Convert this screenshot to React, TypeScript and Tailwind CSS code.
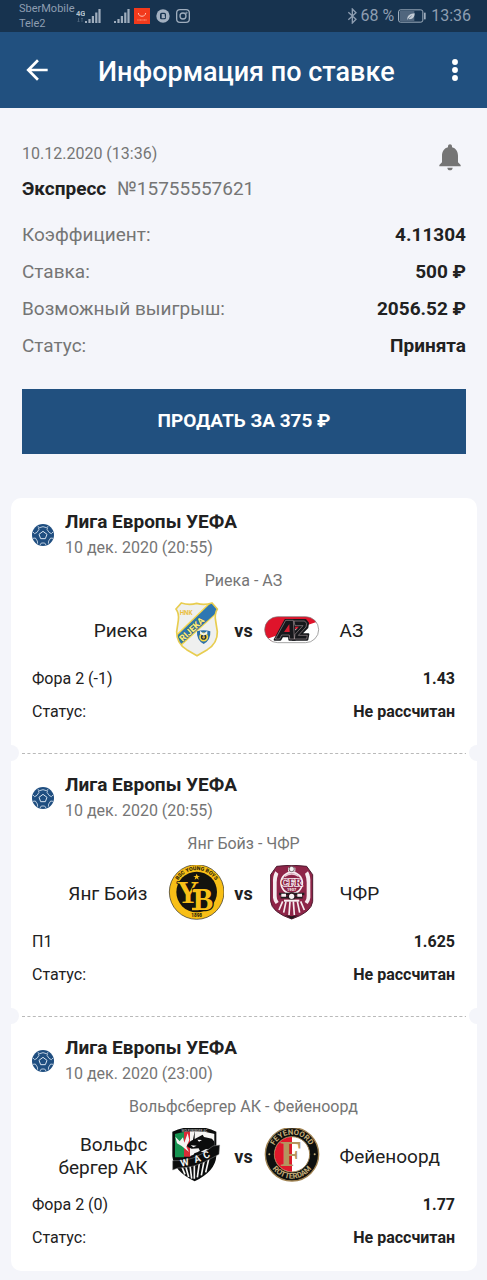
import type { ReactNode } from "react";

type Match = {
  date: string;
  title: string;
  home: string;
  away: string;
  homeLogo: ReactNode;
  awayLogo: ReactNode;
  bet: string;
  odds: string;
};

function Signal() {
  return (
    <svg className="h-4 w-4" viewBox="0 0 16 16" fill="#9fadbd" aria-hidden="true">
      <rect x="0" y="13" width="2" height="2" />
      <rect x="3.4" y="11" width="2.2" height="4" />
      <rect x="6.8" y="8" width="2.2" height="7" />
      <rect x="10.2" y="4.5" width="2.2" height="10.5" />
      <rect x="13.4" y="1" width="2.2" height="14" />
    </svg>
  );
}

function StatusBar() {
  return (
    <div className="flex h-8 items-center justify-between bg-[#17334f] pr-4 pl-[19px] text-[#8e9eb1]">
      <div className="flex items-center">
        <div className="text-[11px] leading-[15px]">
          <div>SberMobile</div>
          <div>Tele2</div>
        </div>
        <svg className="ml-px h-4 w-[9px]" viewBox="0 0 9 16" aria-hidden="true">
          <text x="0" y="8" fontSize="7.5" fontWeight="700" fontFamily="Roboto" fill="#b5c0cc">
            4G
          </text>
          <path d="M2.500 10v4M2.500 14l-1-1M2.500 14l1-1M6 14v-4M6 10l-1 1M6 10l1 1" stroke="#4d647c" strokeWidth="0.9" fill="none" />
        </svg>
        <Signal />
        <span className="w-[13px]" />
        <Signal />
        <svg className="ml-1 h-4 w-4" viewBox="0 0 48 48" aria-hidden="true">
          <rect width="48" height="48" fill="#f23a1c" />
          <path d="M13 15c1 13 21 13 22 0" fill="none" stroke="#ffc4b4" strokeWidth="3" />
          <path d="M10 36h29" stroke="#ff9a80" strokeWidth="3" strokeDasharray="3 1" />
        </svg>
        <svg className="ml-[6px] h-[14px] w-[14px]" viewBox="0 0 42 42" aria-hidden="true">
          <circle cx="21" cy="21" r="20" fill="#a3b0c0" />
          <rect x="12" y="11" width="18" height="20" rx="5" fill="#17334f" />
          <path d="M17 15h6q4 0 4 3 0 2-2 3 3 1 3 3 0 4-5 4h-6z" fill="#a3b0c0" />
        </svg>
        <svg className="ml-[6px] h-[14px] w-[14px]" viewBox="0 0 42 42" fill="none" stroke="#9fadbd" strokeWidth="4" aria-hidden="true">
          <rect x="2" y="2" width="38" height="38" rx="10" />
          <circle cx="21" cy="21" r="9" />
          <circle cx="31.500" cy="11" r="1" />
        </svg>
      </div>
      <div className="flex items-center text-[16px] leading-5">
        <svg className="h-4 w-[11px]" viewBox="0 0 33 48" fill="none" stroke="#8e9eb1" strokeWidth="4" aria-hidden="true">
          <path d="M4 13l23 21-11 11V3l11 11L4 35" />
        </svg>
        <span className="ml-[2px]">68 %</span>
        <svg className="ml-1 h-[14px] w-7" viewBox="0 0 84 42" aria-hidden="true">
          <rect x="1.500" y="2.500" width="73" height="37" rx="6" fill="none" stroke="#9fadbd" strokeWidth="3" />
          <rect x="5" y="6" width="44" height="30" fill="#50667e" />
          <path d="M28 32c-1-13 9-18 22-19 0 13-7 19-19 17z" fill="#c3ccd6" />
          <path d="M30 30l11-10" stroke="#50667e" strokeWidth="2" />
          <rect x="78" y="11" width="5" height="20" fill="#9fadbd" />
        </svg>
        <span className="ml-[5px]">13:36</span>
      </div>
    </div>
  );
}

function Ball() {
  return (
    <svg className="h-[22px] w-[22px] shrink-0" viewBox="0 0 66 66" aria-hidden="true">
      <circle cx="33" cy="33" r="33" fill="#1f4e80" />
      <g fill="none" stroke="#d8e4f0" strokeWidth="3" strokeLinejoin="round">
        <path d="M33 22l12 9-5 13H26l-5-13z" />
        <path d="M17 7l6 4 10-3 10 3 6-4M3 24l5 5 7-4 6-9-2-5M63 24l-5 5-7-4-6-9 2-5M3 43l7-1 6 9 1 8M63 43l-7-1-6 9-1 8M24 63l4-6h10l4 6" strokeWidth="2.500" />
      </g>
    </svg>
  );
}

function RijekaLogo() {
  return (
    <svg className="h-14 w-14" viewBox="24 36 168 168" role="img" aria-label="Риека">
      <defs>
        <clipPath id="rijeka">
          <path d="M64 39q23 8 46 1 23 7 46-1l16 18q-9 15-5 36l5 32q1 34-30 54l-31 18-31-18q-31-20-30-54l5-34q3-20-7-34z" />
        </clipPath>
      </defs>
      <g clipPath="url(#rijeka)">
        <rect x="40" y="36" width="140" height="168" fill="#eff0ef" />
        <path d="M38 144L156 30l26 30L54 176z" fill="#f3d64b" />
        <path d="M40 148L156 36l22 24L54 170z" fill="#2e77b2" />
        <text transform="translate(68 156) rotate(-43)" fontFamily="Roboto" fontSize="27" fontWeight="900" fill="#f8ea7a" stroke="#1d4f6e" strokeWidth="2" paintOrder="stroke">
          RIJEKA
        </text>
      </g>
      <path d="M64 39q23 8 46 1 23 7 46-1l16 18q-9 15-5 36l5 32q1 34-30 54l-31 18-31-18q-31-20-30-54l5-34q3-20-7-34z" fill="none" stroke="#e8cd50" strokeWidth="5" />
      <text x="59" y="76" fontFamily="Roboto" fontSize="19" fontWeight="700" fill="#e9bf3f">
        HNK
      </text>
      <path d="M111 124q20-7 40 0 2 27-20 38-22-11-20-38z" fill="#2b70a8" />
      <circle cx="131" cy="141" r="11" fill="#21343b" stroke="#f4d746" strokeWidth="5" />
      <path d="M120 122l11 9 11-9v9l-11 6-11-6z" fill="#f1f1e9" />
      <circle cx="131" cy="142" r="4" fill="#d9a83b" />
    </svg>
  );
}

function AzLogo() {
  return (
    <svg className="h-14 w-14" viewBox="312 36 168 168" role="img" aria-label="АЗ">
      <defs>
        <clipPath id="az">
          <rect x="314" y="80" width="162" height="78" rx="39" />
        </clipPath>
      </defs>
      <g clipPath="url(#az)">
        <rect x="312" y="78" width="168" height="82" fill="#fff" />
        <path d="M312 78h154l8 18-140 60-22-22z" fill="#df142b" />
        <path d="M312 150l40-14 124-42v66H322z" fill="#fff" />
      </g>
      <rect x="314" y="80" width="162" height="78" rx="39" fill="none" stroke="#777" strokeWidth="2" />
      <g fill="#16171b" stroke="#16171b" strokeWidth="6" strokeLinejoin="round">
        <path d="M344 149l32-59h25l4 59h-17l-1-10h-20l-6 10z" />
        <path d="M397 90h40l7 9-2 14-20 20h23l-3 16h-44l3-19 23-23h-23z" />
      </g>
      <path d="M346 147l31-56h23l3 56h-14l-1-12h-23l-6 12zM402 93h32l6 7-2 11-23 25h27l-2 11h-37l2-14 24-26h-24z" fill="none" stroke="#c7b3b6" strokeWidth="1.500" />
      <path d="M372 126l16-24 1 24z" fill="#d31c30" />
    </svg>
  );
}

function YoungBoysLogo() {
  return (
    <svg className="h-14 w-14" viewBox="24 30 168 168" role="img" aria-label="Янг Бойз">
      <defs>
        <path id="yb-top" d="M44 111a66 66 0 0 1 132 0" />
      </defs>
      <circle cx="110" cy="111" r="82" fill="#f8bf17" stroke="#27251f" strokeWidth="2" />
      <circle cx="110" cy="111" r="61" fill="#14130f" />
      <text fontFamily="Roboto" fontSize="16" fontWeight="900" fill="#30270b">
        <textPath href="#yb-top" startOffset="50%" textAnchor="middle">
          BSC YOUNG BOYS
        </textPath>
      </text>
      <path d="M110 56l3 7h7l-6 4 2 7-6-4-6 4 2-7-6-4h7z" fill="#f8bf17" />
      <g fontFamily="Liberation Serif" fontWeight="700" fill="#f8bf17" strokeLinejoin="round" paintOrder="stroke">
        <text x="50" y="143" fontSize="92" stroke="#14130f" strokeWidth="5">Y</text>
        <text x="98" y="166" fontSize="92" stroke="#14130f" strokeWidth="8">B</text>
      </g>
      <path d="M98 104h22v8H98zM96 158h20v8H96z" fill="#f8bf17" />
      <text x="110" y="187" textAnchor="middle" fontFamily="Roboto" fontSize="14" fontWeight="900" fill="#30270b">
        1898
      </text>
    </svg>
  );
}

function CfrLogo() {
  return (
    <svg className="h-14 w-14" viewBox="312 30 168 168" role="img" aria-label="ЧФР">
      <path d="M350 34q45-7 90 0l18 25v80q-3 33-63 53-60-20-63-53V59z" fill="#8e2548" stroke="#4c1b30" strokeWidth="3" />
      <path d="M346 49q-8 14-7 35v44q1 10 8 19l9-6q-7-10-6-18V82q0-13 5-26zM444 49q8 14 7 35v44q-1 10-8 19l-9-6q7-10 6-18V82q0-13-5-26z" fill="#f6edf0" />
      <circle cx="395" cy="84" r="32" fill="#8e2548" stroke="#f8eef2" strokeWidth="5" />
      <path d="M384 38h22v12h-22z" fill="#eee" />
      <circle cx="395" cy="42" r="8" fill="#f7f2f4" stroke="#38252d" strokeWidth="2" />
      <path d="M374 64q21-14 42 0" stroke="#e8cbd5" strokeWidth="4" fill="none" />
      <text x="395" y="92" textAnchor="middle" fontFamily="Liberation Serif" fontSize="31" fontWeight="700" fill="#8e2548" stroke="#f8edf1" strokeWidth="5" paintOrder="stroke">
        CFR
      </text>
      <text x="395" y="108" textAnchor="middle" fontFamily="Roboto" fontSize="12" fontWeight="700" fill="#fff">
        1907
      </text>
      <path d="M357 117h76M362 127h66" stroke="#221d20" strokeWidth="7" />
      <path d="M364 116h14v9h-14zM412 116h14v9h-14z" fill="#f7f1f3" />
      <circle cx="395" cy="124" r="10" fill="#f7f1f3" stroke="#28161e" strokeWidth="4" />
      <path d="M372 137h46" stroke="#f7f1f3" strokeWidth="6" />
      <path d="M368 139l-11 26M378 139l-7 34M390 139l-3 41M400 139l3 41M412 139l7 34M422 139l11 26" stroke="#f6edf1" strokeWidth="5" />
      <path d="M375 180l20 12 20-12-20 4z" fill="#24171d" />
    </svg>
  );
}

function WacLogo() {
  return (
    <svg className="h-14 w-14" viewBox="24 30 168 168" role="img" aria-label="Вольфсбергер АК">
      <defs>
        <clipPath id="wac">
          <path d="M44 48q30-9 60-9 30 0 60 9v64q0 51-60 79-60-28-60-79z" />
        </clipPath>
      </defs>
      <path d="M37 41q33-15 67-14 35-1 65 14v73q-3 46-65 76-62-29-67-75z" fill="#0b0d0d" />
      <g clipPath="url(#wac)">
        <path d="M44 40h28v78H44z" fill="#169451" />
        <path d="M72 40h20v76H72z" fill="#d92c38" />
        <path d="M90 40h14l-6 30 20 34-28 10z" fill="#f5f5f3" />
        <path d="M104 40h60v60h-60z" fill="#f5f5f3" />
        <path d="M46 56l13 14 10-12 4 16 10-28 5 20-9 20 8 16-22-18-14-8z" fill="#f5f5f3" />
        <path d="M81 82l11-13 12-6 24-13 4 7 24 5 14 18v42H95l8-16 17-6-4-9-21 1-12-5z" fill="#0b0d0d" />
        <path d="M92 82l18 1-10 5zM112 65l14 1-9 5z" fill="#fff" />
        <path d="M122 101l16-8 14 2-14 3 4 8z" fill="#e9e9e9" />
      </g>
      <text x="103" y="42" textAnchor="middle" fontFamily="Roboto" fontSize="9" fontWeight="500" fill="#b5b5b3">
        WOLFSBERGER AC
      </text>
      <g stroke="#f5f5f3" strokeWidth="5" clipPath="url(#wac)">
        <path d="M65 145l10 24M77 145l9 32M90 143l5 39M103 141v41M118 136l-6 42M132 130l-8 42M146 124l-9 39" />
      </g>
      <path d="M38 128q62 6 121-44l20-3-2 28-23 12q-50 30-100 29l-16 6z" fill="#0b0d0d" stroke="#8d8e8e" strokeWidth="1.500" />
      <g fontFamily="Roboto" fontSize="29" fontWeight="700" fill="#f5f5f3">
        <text transform="translate(64 146) rotate(-13)">W</text>
        <text transform="translate(106 135) rotate(-19)">A</text>
        <text transform="translate(135 124) rotate(-25)">C</text>
      </g>
    </svg>
  );
}

function FeyenoordLogo() {
  return (
    <svg className="h-14 w-14" viewBox="312 30 168 168" role="img" aria-label="Фейеноорд">
      <defs>
        <path id="fey-top" d="M337 109a59 59 0 0 1 118 0" />
        <path id="fey-bottom" d="M323 109a73 73 0 0 0 146 0" />
      </defs>
      <circle cx="396" cy="109" r="80" fill="#0e100f" stroke="#a08352" strokeWidth="4" />
      <circle cx="396" cy="109" r="53" fill="#fff" stroke="#a08352" strokeWidth="3" />
      <path d="M396 57a52 52 0 0 0 0 104z" fill="#df192b" />
      <g fontFamily="Roboto" fontSize="23" fontWeight="700" fill="#c6ad78">
        <text>
          <textPath href="#fey-top" startOffset="50%" textAnchor="middle">FEYENOORD</textPath>
        </text>
        <text>
          <textPath href="#fey-bottom" startOffset="50%" textAnchor="middle">ROTTERDAM</textPath>
        </text>
      </g>
      <circle cx="328" cy="109" r="3" fill="#c6ad78" />
      <circle cx="464" cy="109" r="3" fill="#c6ad78" />
      <text x="393" y="145" textAnchor="middle" fontFamily="Liberation Serif" fontSize="108" fontWeight="700" fill="#b5955f">
        F
      </text>
    </svg>
  );
}

const summary = [
  ["Коэффициент:", "4.11304"],
  ["Ставка:", "500 ₽"],
  ["Возможный выигрыш:", "2056.52 ₽"],
  ["Статус:", "Принята"],
];

const matches: Match[] = [
  {
    date: "10 дек. 2020 (20:55)",
    title: "Риека - АЗ",
    home: "Риека",
    away: "АЗ",
    homeLogo: <RijekaLogo />,
    awayLogo: <AzLogo />,
    bet: "Фора 2 (-1)",
    odds: "1.43",
  },
  {
    date: "10 дек. 2020 (20:55)",
    title: "Янг Бойз - ЧФР",
    home: "Янг Бойз",
    away: "ЧФР",
    homeLogo: <YoungBoysLogo />,
    awayLogo: <CfrLogo />,
    bet: "П1",
    odds: "1.625",
  },
  {
    date: "10 дек. 2020 (23:00)",
    title: "Вольфсбергер АК - Фейеноорд",
    home: "Вольфс\u200bбергер АК",
    away: "Фейеноорд",
    homeLogo: <WacLogo />,
    awayLogo: <FeyenoordLogo />,
    bet: "Фора 2 (0)",
    odds: "1.77",
  },
];

function Divider() {
  return (
    <div className="flex h-4 items-center overflow-hidden" aria-hidden="true">
      <span className="-ml-2 h-4 w-4 rounded-full bg-[#f4f5fa]" />
      <svg className="mx-[3px] h-px flex-1">
        <line x1="0" y1="0.500" x2="100%" y2="0.500" stroke="#b9b9b9" strokeDasharray="3 2.400" />
      </svg>
      <span className="-mr-2 h-4 w-4 rounded-full bg-[#f4f5fa]" />
    </div>
  );
}

function MatchSection({ match }: { match: Match }) {
  return (
    <section className="pt-[11px] pr-[22px] pb-[17px] pl-[21px]">
      <div className="flex items-center gap-[11px] leading-[26px]">
        <Ball />
        <div>
          <h2 className="text-[19px] font-bold">Лига Европы УЕФА</h2>
          <p className="text-[16px] text-[#757575]">{match.date}</p>
        </div>
      </div>
      <p className="mt-[7px] text-center text-[16px] leading-[26px] text-[#757575]">{match.title}</p>
      <div className="mt-2 grid grid-cols-[1fr_56px_40px_56px_1fr] items-center text-[19px] leading-[23px]">
        <span className="pr-5 text-right">{match.home}</span>
        {match.homeLogo}
        <span className="text-center text-[18px] font-bold">vs</span>
        {match.awayLogo}
        <span className="pl-5">{match.away}</span>
      </div>
      <dl className="mt-1 text-[16px] leading-[33px]">
        <div className="flex justify-between">
          <dt>{match.bet}</dt>
          <dd className="font-bold">{match.odds}</dd>
        </div>
        <div className="flex justify-between">
          <dt>Статус:</dt>
          <dd className="font-bold">Не рассчитан</dd>
        </div>
      </dl>
    </section>
  );
}

export default function App() {
  return (
    <div className="min-h-screen bg-[#f4f5fa] pb-[10px] font-['Roboto',sans-serif] text-[#212121]">
      <StatusBar />
      <header className="flex h-[76px] items-center justify-between bg-[#21507f] pr-4 pl-[21px] text-white">
        <div className="flex items-center gap-[45px]">
          <button type="button" aria-label="Назад">
            <svg className="h-8 w-8" viewBox="0 0 24 24" fill="currentColor">
              <path d="M20 11H7.830l5.590-5.590L12 4l-8 8 8 8 1.410-1.410L7.830 13H20v-2z" />
            </svg>
          </button>
          <h1 className="pt-1 text-[27px] leading-8 font-medium">Информация по ставке</h1>
        </div>
        <button type="button" aria-label="Меню">
          <svg className="h-8 w-8" viewBox="0 0 24 24" fill="currentColor">
            <circle cx="12" cy="6" r="2.200" />
            <circle cx="12" cy="12" r="2.200" />
            <circle cx="12" cy="18" r="2.200" />
          </svg>
        </button>
      </header>
      <main>
        <div className="pt-7 pr-[21px] pl-[22px]">
          <div className="flex items-start justify-between">
            <div className="leading-[35px]">
              <p className="text-[16px] text-[#757575]">10.12.2020 (13:36)</p>
              <p className="flex gap-[11px] text-[19px] text-[#757575]">
                <b className="font-bold text-[#212121]">Экспресс</b>
                <span>№15755557621</span>
              </p>
            </div>
            <button type="button" aria-label="Уведомления" className="mt-[5px] text-[#757575]">
              <svg className="h-8 w-8" viewBox="0 0 24 24" fill="currentColor">
                <path d="M12 22c1.100 0 2-.900 2-2h-4c0 1.100.890 2 2 2zm6-6v-5c0-3.070-1.640-5.640-4.500-6.320V4c0-.830-.670-1.500-1.500-1.500s-1.500.670-1.500 1.500v.680C7.630 5.360 6 7.920 6 11v5l-2 2v1h16v-1l-2-2z" />
              </svg>
            </button>
          </div>
          <dl className="mt-[10px] text-[19px] leading-[37px]">
            {summary.map(([label, value]) => (
              <div key={label} className="flex justify-between">
                <dt className="text-[#757575]">{label}</dt>
                <dd className="font-bold">{value}</dd>
              </div>
            ))}
          </dl>
          <button type="button" className="mt-[25px] h-[65px] w-full bg-[#21507f] text-[19px] font-bold text-white">
            ПРОДАТЬ ЗА 375 ₽
          </button>
        </div>
        <div className="mt-11 mr-[10px] ml-[11px] rounded-[10px] bg-white">
          {matches.map((match, index) => (
            <div key={match.title}>
              {index > 0 && <Divider />}
              <MatchSection match={match} />
            </div>
          ))}
        </div>
      </main>
    </div>
  );
}
